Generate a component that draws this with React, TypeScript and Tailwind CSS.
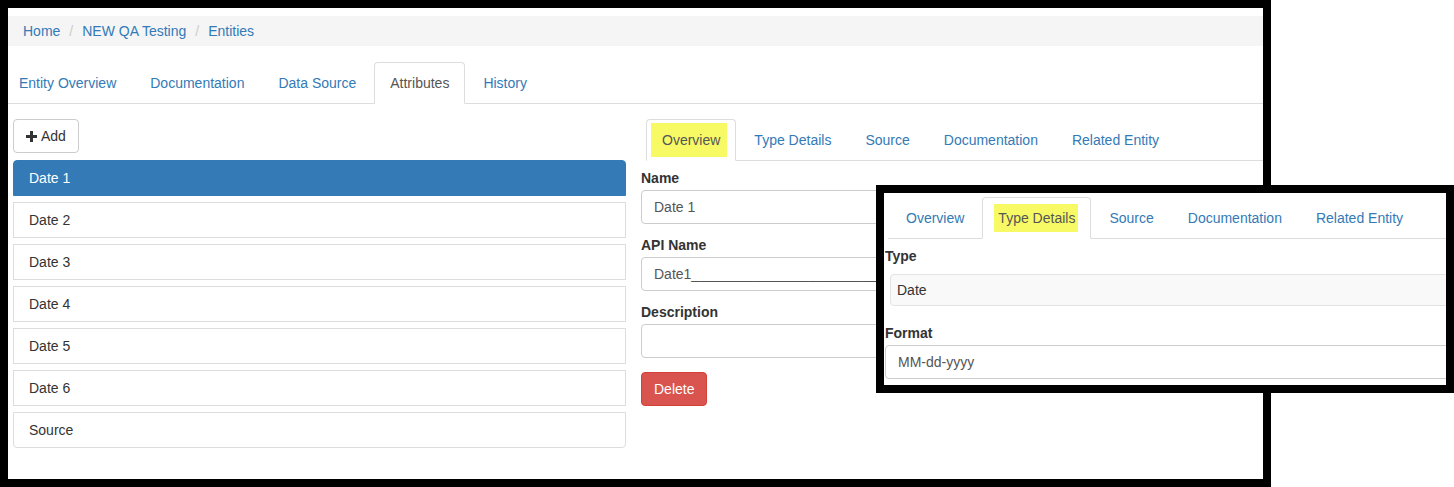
import React from "react";

const crumbs = ["Home", "NEW QA Testing", "Entities"];
const mainTabs = ["Entity Overview", "Documentation", "Data Source", "Attributes", "History"];
const subTabs = ["Overview", "Type Details", "Source", "Documentation", "Related Entity"];
const attributes = ["Date 1", "Date 2", "Date 3", "Date 4", "Date 5", "Date 6", "Source"];

type TabProps = {
  label: string;
  active?: boolean;
  highlight?: "big" | "small";
};

const Tab = ({ label, active, highlight }: TabProps) => {
  const text =
    highlight === "big" ? (
      <span className="-ml-[11px] -mr-[7px] bg-[#f7fa65] py-[9px] pl-[11px] pr-[7px]">{label}</span>
    ) : highlight === "small" ? (
      <span className="-ml-[4px] -mr-[3px] bg-[#f7fa65] py-[6px] pl-[4px] pr-[3px]">{label}</span>
    ) : (
      label
    );

  if (active) {
    return (
      <li className="relative -mb-px mr-[2px] whitespace-nowrap rounded-t-[4px] border border-[#ddd] border-b-white bg-white px-[15px] py-[10px] leading-[20px] text-[#555]">
        {text}
      </li>
    );
  }
  return (
    <li className="-mb-px mr-[2px] whitespace-nowrap border border-transparent px-[15px] py-[10px] leading-[20px] text-[#337ab7]">
      {text}
    </li>
  );
};

const PlusIcon = () => (
  <svg width="11" height="11" viewBox="0 0 11 11" className="fill-[#333]">
    <path d="M4 0h3v4h4v3H7v4H4V7H0V4h4z" />
  </svg>
);

const App = () => {
  return (
    <div className="relative h-[487px] w-[1454px] bg-white font-['Liberation_Sans',Arial,sans-serif] text-[14px] text-[#333]">
      {/* main screenshot */}
      <div className="flex h-[487px] w-[1271px] flex-col overflow-hidden border-8 border-black bg-white">
        <div className="mt-[8px] flex h-[30px] items-center bg-[#f5f5f5] px-[15px] leading-[20px]">
          {crumbs.map((c, i) => (
            <React.Fragment key={c}>
              {i > 0 && <span className="mx-[9px] text-[#ccc]">/</span>}
              <span className="text-[#337ab7]">{c}</span>
            </React.Fragment>
          ))}
        </div>

        <ul className="-ml-[5px] mt-[16px] flex border-b border-[#ddd]">
          {mainTabs.map((t) => (
            <Tab key={t} label={t} active={t === "Attributes"} />
          ))}
        </ul>

        <div className="mt-[15px] flex">
          <div className="ml-[5px] w-[613px] shrink-0">
            <button className="flex h-[34px] items-center gap-[4px] rounded-[4px] border border-[#ccc] bg-white px-[12px] text-[#333]">
              <PlusIcon />
              <span>Add</span>
            </button>
            <div className="mt-[7px] flex flex-col gap-[6px]">
              {attributes.map((a, i) => (
                <div
                  key={a}
                  className={`flex h-[36px] items-center border px-[15px] ${
                    i === 0
                      ? "rounded-t-[4px] border-[#337ab7] bg-[#337ab7] text-white"
                      : "border-[#ddd] bg-white text-[#333]"
                  } ${i === attributes.length - 1 ? "rounded-b-[4px]" : ""}`}
                >
                  {a}
                </div>
              ))}
            </div>
          </div>

          <div className="ml-[15px] flex-1">
            <ul className="ml-[5px] flex border-b border-[#ddd]">
              {subTabs.map((t) => (
                <Tab key={t} label={t} active={t === "Overview"} highlight={t === "Overview" ? "big" : undefined} />
              ))}
            </ul>

            <label className="mt-[7px] block font-bold leading-[20px]">Name</label>
            <input
              readOnly
              value="Date 1"
              className="mt-[2px] block h-[34px] w-full rounded-[4px] border border-[#ccc] px-[12px] text-[#555] outline-none"
            />

            <label className="mt-[11px] block font-bold leading-[20px]">API Name</label>
            <input
              readOnly
              value={"Date1" + "_".repeat(30)}
              className="mt-[2px] block h-[34px] w-full rounded-[4px] border border-[#ccc] px-[12px] text-[#555] outline-none"
            />

            <label className="mt-[11px] block font-bold leading-[20px]">Description</label>
            <input
              readOnly
              value=""
              className="mt-[2px] block h-[34px] w-full rounded-[4px] border border-[#ccc] px-[12px] text-[#555] outline-none"
            />

            <button className="mt-[14px] h-[34px] rounded-[4px] border border-[#d43f3a] bg-[#d9534f] px-[12px] text-white">
              Delete
            </button>
          </div>
        </div>
      </div>

      {/* zoomed-in inset of the Type Details tab */}
      <div className="absolute left-[876px] top-[185px] flex h-[208px] w-[578px] flex-col overflow-hidden border-8 border-black bg-white">
        <ul className="ml-[4px] mt-[4px] flex border-b border-[#ddd] pl-[2px]">
          {subTabs.map((t) => (
            <Tab
              key={t}
              label={t}
              active={t === "Type Details"}
              highlight={t === "Type Details" ? "small" : undefined}
            />
          ))}
        </ul>

        <label className="ml-[1px] mt-[7px] block font-bold leading-[20px]">Type</label>
        <div className="ml-[6px] mt-[8px] flex h-[32px] w-[620px] shrink-0 items-center rounded-[4px] border border-[#e3e3e3] bg-[#f9f9f9] px-[6px]">
          Date
        </div>

        <label className="ml-[1px] mt-[17px] block font-bold leading-[20px]">Format</label>
        <input
          readOnly
          value="MM-dd-yyyy"
          className="ml-[1px] mt-[2px] block h-[34px] w-[620px] shrink-0 rounded-[4px] border border-[#ccc] px-[12px] text-[#555] outline-none"
        />
      </div>
    </div>
  );
};

export default App;
